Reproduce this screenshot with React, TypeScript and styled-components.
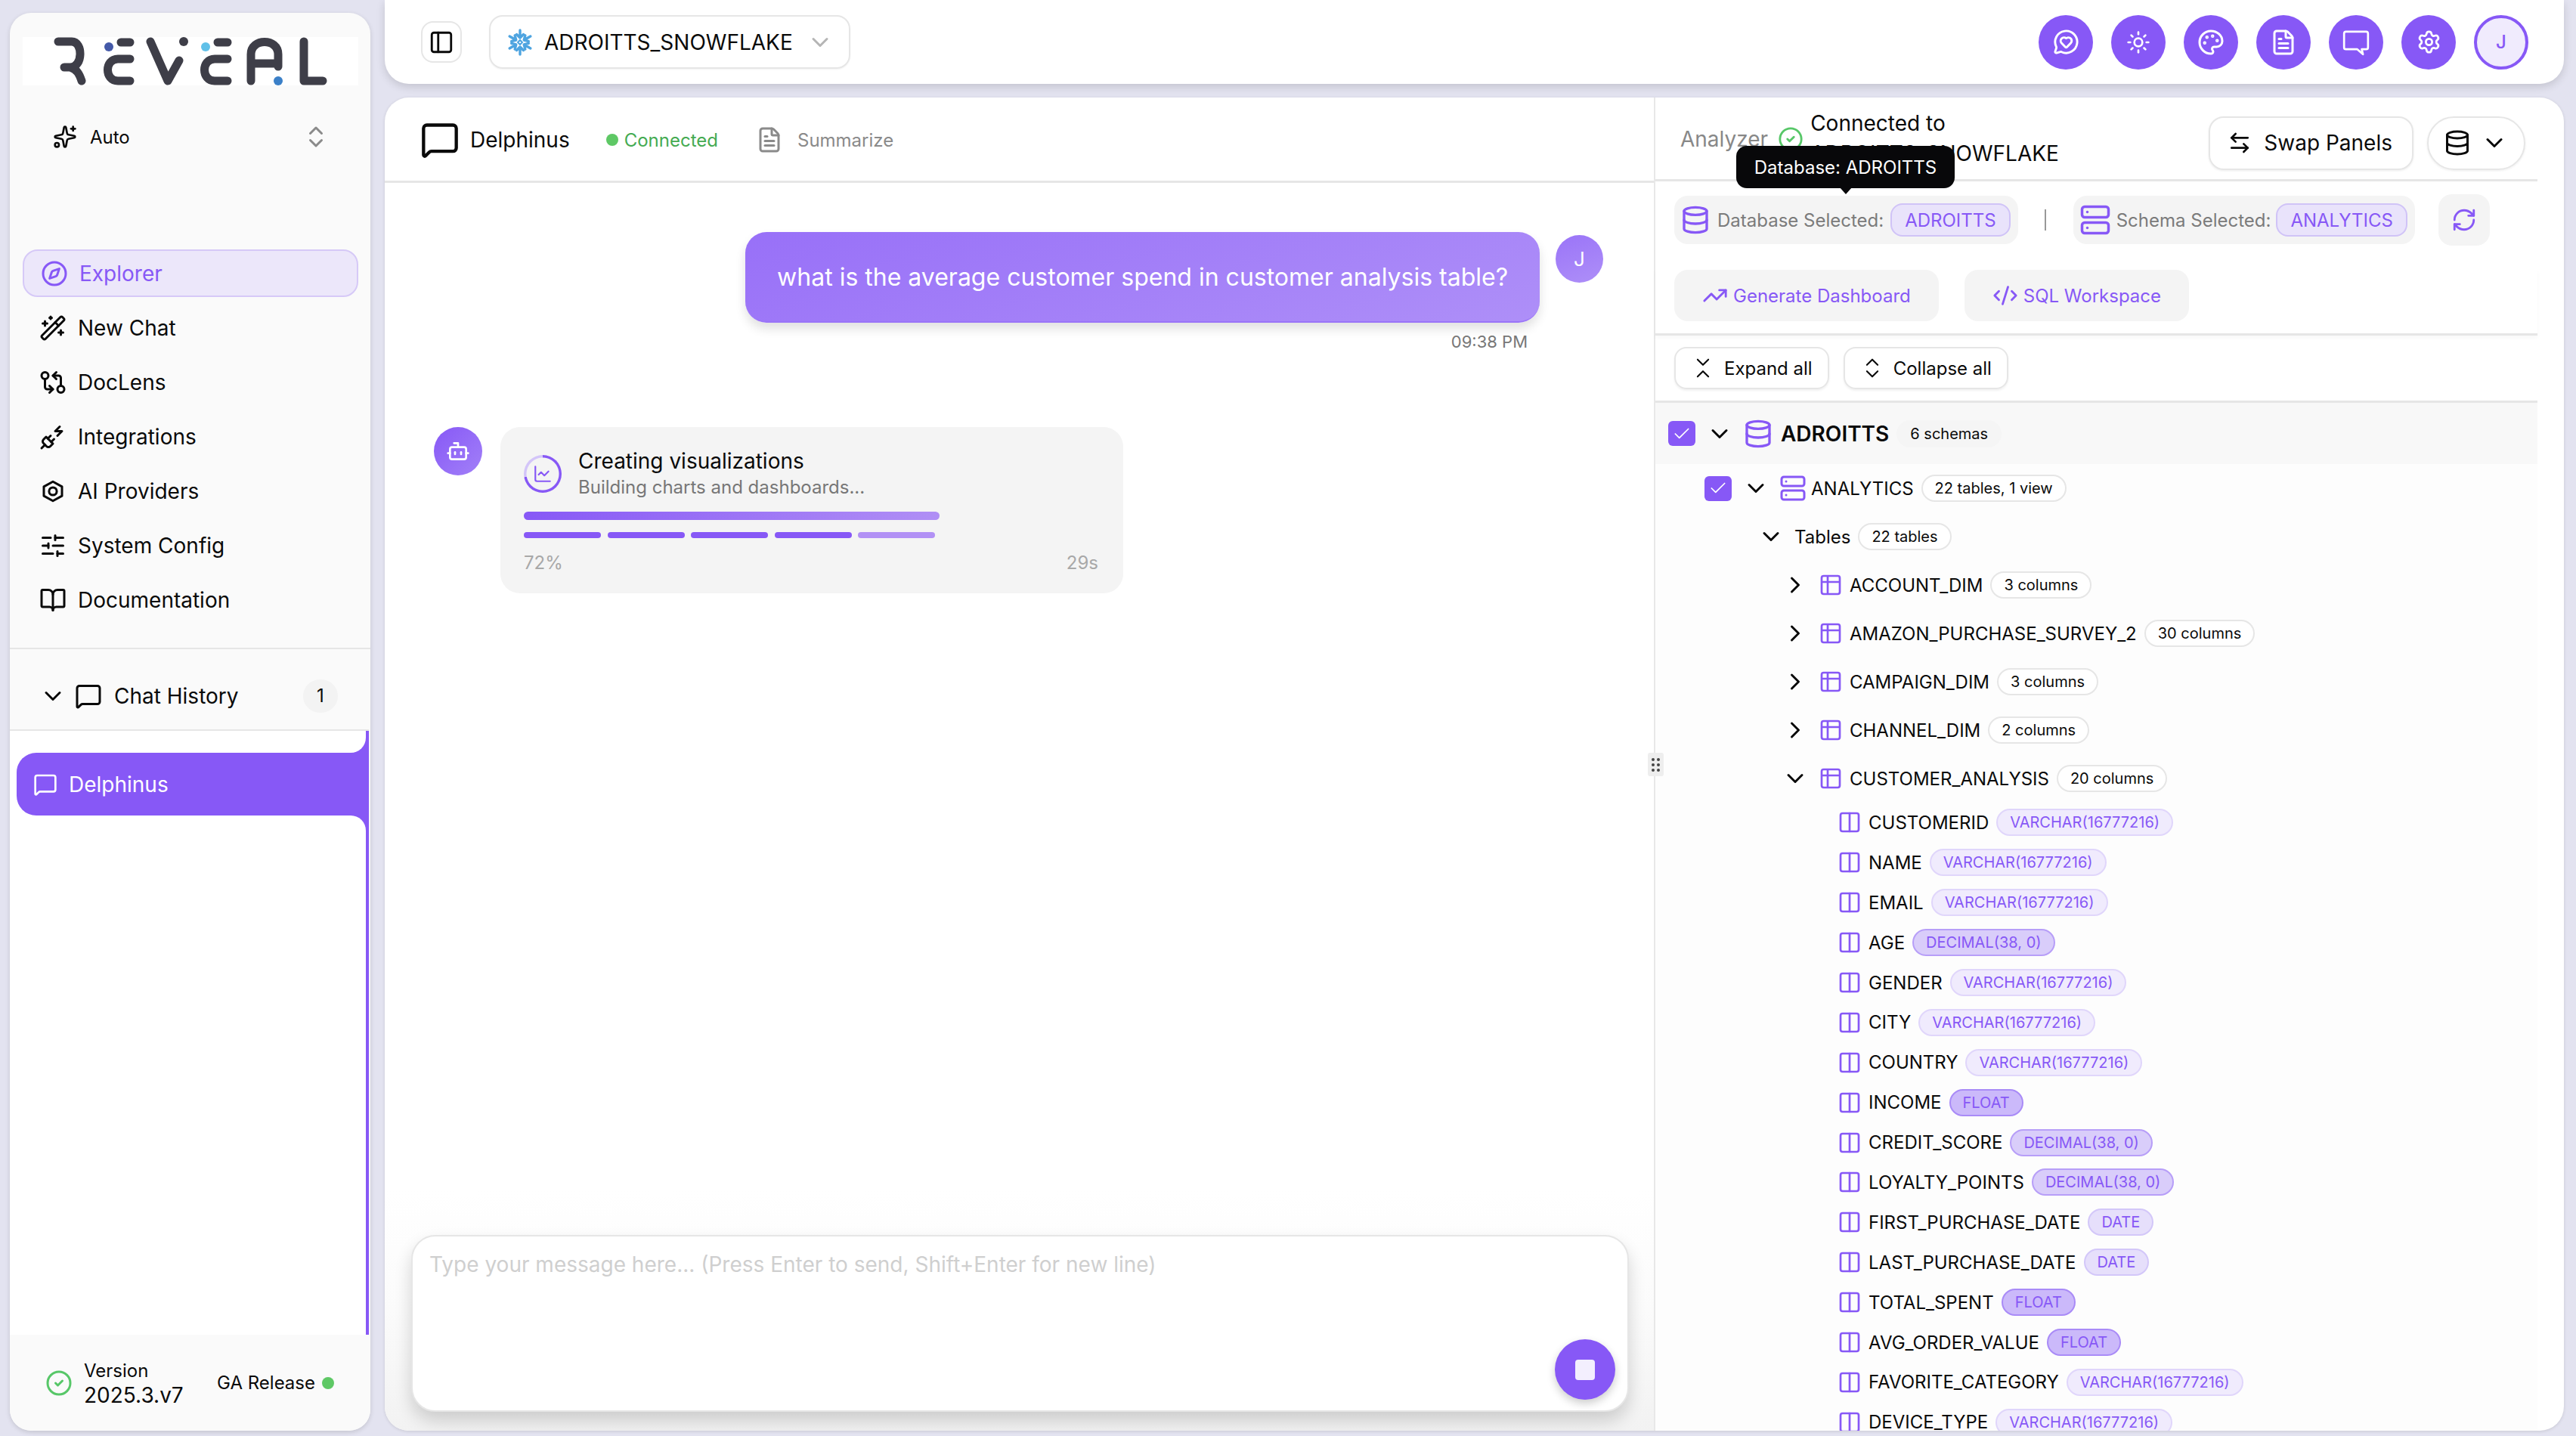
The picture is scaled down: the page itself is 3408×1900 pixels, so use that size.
import React from "react";
import styled, { createGlobalStyle } from "styled-components";
import {
  ArrowLeftRight,
  BookOpen,
  Bot,
  ChartLine,
  Check,
  ChevronDown,
  ChevronRight,
  ChevronsDownUp,
  ChevronsUpDown,
  CircleCheck,
  CodeXml,
  Columns2,
  Compass,
  Database,
  FileText,
  GitCompareArrows,
  MessageCircleHeart,
  MessageSquare,
  Palette,
  PanelLeft,
  PlugZap,
  RefreshCw,
  Server,
  Settings,
  SlidersHorizontal,
  Sparkles,
  Sun,
  Table2,
  TrendingUp,
  WandSparkles,
} from "lucide-react";

const PURPLE = "#8758f6";

type PillKind = "varchar" | "decimal" | "float" | "date";

const pillColors: Record<PillKind, { bg: string; border: string }> = {
  varchar: { bg: "#f0ebfd", border: "#e0d6fb" },
  decimal: { bg: "#d9cdfa", border: "#b79ef8" },
  float: { bg: "#cbb9fa", border: "#a98bf7" },
  date: { bg: "#e6dffb", border: "#d3c7f9" },
};

const tables = [
  { name: "ACCOUNT_DIM", count: "3 columns" },
  { name: "AMAZON_PURCHASE_SURVEY_2", count: "30 columns" },
  { name: "CAMPAIGN_DIM", count: "3 columns" },
  { name: "CHANNEL_DIM", count: "2 columns" },
];

const columns: { name: string; type: string; kind: PillKind }[] = [
  { name: "CUSTOMERID", type: "VARCHAR(16777216)", kind: "varchar" },
  { name: "NAME", type: "VARCHAR(16777216)", kind: "varchar" },
  { name: "EMAIL", type: "VARCHAR(16777216)", kind: "varchar" },
  { name: "AGE", type: "DECIMAL(38, 0)", kind: "decimal" },
  { name: "GENDER", type: "VARCHAR(16777216)", kind: "varchar" },
  { name: "CITY", type: "VARCHAR(16777216)", kind: "varchar" },
  { name: "COUNTRY", type: "VARCHAR(16777216)", kind: "varchar" },
  { name: "INCOME", type: "FLOAT", kind: "float" },
  { name: "CREDIT_SCORE", type: "DECIMAL(38, 0)", kind: "decimal" },
  { name: "LOYALTY_POINTS", type: "DECIMAL(38, 0)", kind: "decimal" },
  { name: "FIRST_PURCHASE_DATE", type: "DATE", kind: "date" },
  { name: "LAST_PURCHASE_DATE", type: "DATE", kind: "date" },
  { name: "TOTAL_SPENT", type: "FLOAT", kind: "float" },
  { name: "AVG_ORDER_VALUE", type: "FLOAT", kind: "float" },
  { name: "FAVORITE_CATEGORY", type: "VARCHAR(16777216)", kind: "varchar" },
  { name: "DEVICE_TYPE", type: "VARCHAR(16777216)", kind: "varchar" },
];

const GlobalStyle = createGlobalStyle`
  html, body {
    margin: 0;
    padding: 0;
    height: 1900px;
    overflow: hidden;
    background: #e3e3f0;
    font-family: Inter, "Noto Sans", sans-serif;
    color: #0a0a0a;
  }
  * { box-sizing: border-box; }
`;

const Page = styled.div`
  display: flex;
  gap: 19px;
  height: 1900px;
  padding: 0 16px 7px 13px;
  background: #e3e3f0;
`;

const Sidebar = styled.aside`
  display: flex;
  flex-direction: column;
  width: 477px;
  flex-shrink: 0;
  margin-top: 17px;
  padding-top: 32px;
  background: #fafafa;
  border-radius: 28px;
  box-shadow: 0 2px 6px rgba(0, 0, 0, 0.14);
  overflow: hidden;
`;

const LogoBox = styled.div`
  height: 64px;
  margin: 0 16px 0 17px;
  background: #fff;
  svg { display: block; }
`;

const ModeRow = styled.div`
  display: flex;
  align-items: center;
  height: 44px;
  margin: 46px 0 0 57px;
  padding-right: 54px;
  font-size: 24px;
  gap: 17px;
  span { flex: 1; }
  svg:last-child { color: #8a8a8a; }
`;

const Nav = styled.nav`
  display: flex;
  flex-direction: column;
  gap: 9px;
  margin-top: 127px;
  padding: 0 16px 32px 17px;
  border-bottom: 2px solid #e6e6e6;
`;

const NavItem = styled.div<{ $active?: boolean }>`
  display: flex;
  align-items: center;
  gap: 15px;
  height: 63px;
  padding-left: ${(p) => (p.$active ? "22px" : "20px")};
  font-size: 28px;
  border-radius: 20px;
  color: ${(p) => (p.$active ? PURPLE : "#0a0a0a")};
  background: ${(p) => (p.$active ? "#ece7fa" : "transparent")};
  border: 2px solid ${(p) => (p.$active ? "#d6c9f7" : "transparent")};
`;

const HistoryHeader = styled.div`
  display: flex;
  align-items: center;
  height: 108px;
  margin-right: 2px;
  padding: 17px 41px 0 39px;
  font-size: 28px;
  border-bottom: 2px solid #e6e6e6;
  gap: 11px;
  span { flex: 1; margin-left: 5px; }
`;

const CountBadge = styled.div`
  display: flex;
  align-items: center;
  justify-content: center;
  width: 46px;
  height: 44px;
  border-radius: 22px;
  background: #f3f3f3;
  font-size: 24px;
`;

const HistoryList = styled.div`
  display: flex;
  flex-direction: column;
  flex: 1;
  margin-right: 2px;
  background: ${PURPLE};
`;

const HistorySpacer = styled.div<{ $flex?: boolean; $top?: boolean }>`
  ${(p) => (p.$flex ? "flex: 1;" : "height: 29px;")}
  margin-right: 4px;
  background: #fff;
  border-${(p) => (p.$top ? "top" : "bottom")}-right-radius: 20px;
`;

const HistoryItemWrap = styled.div`
  background: #fff;
`;

const HistoryItem = styled.div`
  display: flex;
  align-items: center;
  gap: 15px;
  height: 83px;
  margin-left: 9px;
  padding-left: 22px;
  background: ${PURPLE};
  color: #fff;
  font-size: 28px;
  border-radius: 26px 0 0 26px;
`;

const SideFooter = styled.div`
  display: flex;
  align-items: center;
  height: 127px;
  padding: 0 48px 0 47px;
  background: #fafafa;
  svg { color: #57c768; flex-shrink: 0; }
`;

const VersionBlock = styled.div`
  display: flex;
  flex-direction: column;
  flex: 1;
  margin-left: 15px;
  line-height: 33px;
  font-size: 28px;
  small { font-size: 24px; }
`;

const ReleaseLabel = styled.div`
  display: flex;
  align-items: center;
  gap: 9px;
  font-size: 24px;
`;

const Dot = styled.i<{ $size?: number }>`
  display: block;
  width: ${(p) => p.$size ?? 16}px;
  height: ${(p) => p.$size ?? 16}px;
  border-radius: 50%;
  background: #5ec865;
`;

const MainColumn = styled.div`
  display: flex;
  flex-direction: column;
  gap: 18px;
  flex: 1;
  min-width: 0;
`;

const TopBar = styled.header`
  display: flex;
  align-items: center;
  flex-shrink: 0;
  height: 111px;
  padding: 0 47px 0 48px;
  background: #fff;
  border-radius: 0 0 32px 32px;
  box-shadow: 0 4px 12px rgba(0, 0, 0, 0.14);
`;

const ToggleButton = styled.div`
  display: flex;
  align-items: center;
  justify-content: center;
  width: 54px;
  height: 55px;
  border: 2px solid #e6e6e6;
  border-radius: 16px;
`;

const SourceSelect = styled.div`
  display: flex;
  align-items: center;
  width: 478px;
  height: 71px;
  margin-left: 36px;
  padding-left: 22px;
  border: 2px solid #e6e6e6;
  border-radius: 18px;
  font-size: 28px;
  box-shadow: 0 1px 2px rgba(0, 0, 0, 0.05);
  span { margin: 0 18px 0 15px; }
  > svg:last-child { color: #b5b5b5; }
`;

const TopActions = styled.div`
  display: flex;
  gap: 24px;
  margin-left: auto;
`;

const RoundAction = styled.div`
  display: flex;
  align-items: center;
  justify-content: center;
  width: 72px;
  height: 72px;
  border-radius: 50%;
  background: ${PURPLE};
  color: #fff;
`;

const ProfileAvatar = styled.div`
  display: flex;
  align-items: center;
  justify-content: center;
  width: 72px;
  height: 72px;
  border-radius: 50%;
  background: #f0ebfd;
  border: 4px solid ${PURPLE};
  color: ${PURPLE};
  font-size: 24px;
  font-weight: 500;
`;

const Workspace = styled.main`
  display: flex;
  flex: 1;
  min-height: 0;
  background: #fff;
  border-radius: 32px;
  overflow: hidden;
  box-shadow: 0 1px 4px rgba(0, 0, 0, 0.12);
`;

const ChatPanel = styled.section`
  display: flex;
  flex-direction: column;
  width: 1681px;
  flex-shrink: 0;
  border-right: 2px solid #e8e8e8;
`;

const ChatHeader = styled.div`
  display: flex;
  align-items: center;
  flex-shrink: 0;
  height: 113px;
  padding: 2px 0 0 47px;
  border-bottom: 3px solid #e6e6e6;
`;

const ChatTitle = styled.div`
  margin-left: 14px;
  font-size: 28px;
`;

const StatusText = styled.div`
  display: flex;
  align-items: center;
  gap: 8px;
  margin-left: 48px;
  color: #45ab52;
  font-size: 24px;
`;

const SummarizeText = styled.div`
  display: flex;
  align-items: center;
  gap: 19px;
  margin-left: 50px;
  color: #8a8a8a;
  font-size: 24px;
`;

const Messages = styled.div`
  display: flex;
  flex-direction: column;
  flex: 1;
  padding-top: 65px;
`;

const UserRow = styled.div`
  display: flex;
  justify-content: flex-end;
  gap: 21px;
  padding-right: 67px;
`;

const UserColumn = styled.div`
  display: flex;
  flex-direction: column;
  align-items: flex-end;
`;

const Bubble = styled.div`
  display: flex;
  align-items: center;
  height: 120px;
  padding: 0 42px;
  border-radius: 28px;
  background: linear-gradient(160deg, #9870f8, #ae8ff8);
  border-bottom: 2px solid #9a74f8;
  color: #fff;
  font-size: 32px;
  box-shadow: 0 8px 14px rgba(0, 0, 0, 0.12);
`;

const TimeLabel = styled.div`
  margin: 12px 16px 0 0;
  color: #777;
  font-size: 22px;
`;

const UserAvatar = styled.div`
  display: flex;
  align-items: center;
  justify-content: center;
  width: 63px;
  height: 63px;
  margin-top: 4px;
  border-radius: 50%;
  background: linear-gradient(160deg, #9a74f8, #ae8ff8);
  color: #fff;
  font-size: 26px;
`;

const AssistantRow = styled.div`
  display: flex;
  gap: 24px;
  margin-top: 100px;
  padding-left: 65px;
`;

const BotAvatar = styled.div`
  display: flex;
  align-items: center;
  justify-content: center;
  width: 64px;
  height: 64px;
  border-radius: 50%;
  color: #fff;
  background: linear-gradient(135deg, #8758f6, #a280f8);
`;

const ProgressCard = styled.div`
  display: flex;
  flex-direction: column;
  width: 824px;
  height: 220px;
  padding: 27px 33px 0 31px;
  background: #f4f4f4;
  border-radius: 26px;
`;

const ProgressHead = styled.div`
  display: flex;
  align-items: center;
  gap: 22px;
`;

const ProgressRing = styled.div<{ $percent: number }>`
  display: flex;
  align-items: center;
  justify-content: center;
  width: 50px;
  height: 50px;
  border-radius: 50%;
  color: ${PURPLE};
  background:
    radial-gradient(closest-side, #f4f4f4 calc(100% - 4px), transparent calc(100% - 3px)),
    conic-gradient(${PURPLE} 0 ${(p) => p.$percent}%, #d3c5f9 0);
`;

const ProgressTitle = styled.div`
  font-size: 28px;
  line-height: 36px;
`;

const ProgressSub = styled.div`
  color: #777;
  font-size: 24px;
  line-height: 34px;
`;

const ProgressBar = styled.div`
  width: 550px;
  height: 11px;
  margin-top: 15px;
  border-radius: 6px;
  background: linear-gradient(90deg, #8758f6, #b08ff5);
`;

const Segments = styled.div`
  display: flex;
  gap: 8.5px;
  margin-top: 16px;
`;

const Segment = styled.div<{ $light?: boolean }>`
  width: 102px;
  height: 8px;
  border-radius: 4px;
  background: ${(p) => (p.$light ? "#b291f5" : PURPLE)};
`;

const ProgressFoot = styled.div`
  display: flex;
  justify-content: space-between;
  margin-top: 18px;
  color: #a8a8a8;
  font-size: 24px;
`;

const ComposerArea = styled.div`
  flex-shrink: 0;
  padding: 60px 33px 25px 35px;
  background: linear-gradient(180deg, #fff 0%, #fbfbfb 50%, #f2f2f2 100%);
`;

const Composer = styled.div`
  position: relative;
  height: 234px;
  padding: 20px 22px;
  background: #fff;
  border: 2px solid #e6e6e6;
  border-radius: 32px;
  color: #cfcfcf;
  font-size: 28px;
  box-shadow: 0 12px 22px rgba(0, 0, 0, 0.16);
`;

const StopButton = styled.div`
  position: absolute;
  right: 16px;
  bottom: 14px;
  display: flex;
  align-items: center;
  justify-content: center;
  width: 80px;
  height: 80px;
  border-radius: 50%;
  background: ${PURPLE};
  box-shadow: 0 5px 12px rgba(0, 0, 0, 0.2);
  &::after {
    content: "";
    width: 26px;
    height: 27px;
    border-radius: 4px;
    background: #f3effe;
  }
`;

const ResizeHandle = styled.div`
  position: absolute;
  left: -10px;
  top: 867px;
  display: grid;
  grid-template-columns: 4px 4px;
  gap: 3px;
  align-content: center;
  justify-content: center;
  width: 21px;
  height: 31px;
  border-radius: 3px;
  background: #eee;
  i { width: 4px; height: 4px; border-radius: 50%; background: #444; }
`;

const AnalyzerPanel = styled.section`
  position: relative;
  display: flex;
  flex: 1;
  min-width: 0;
`;

const AnalyzerInner = styled.div`
  display: flex;
  flex-direction: column;
  width: 1167px;
  flex-shrink: 0;
`;

const AnalyzerHeader = styled.div`
  display: flex;
  align-items: center;
  flex-shrink: 0;
  height: 111px;
  padding: 2px 16px 0 33px;
  border-bottom: 3px solid #e6e6e6;
`;

const AnalyzerLabel = styled.div`
  color: #888;
  font-size: 28px;
  margin-right: 13px;
`;

const ConnectedText = styled.div`
  width: 340px;
  margin: -2px 0 0 9px;
  font-size: 28px;
  line-height: 40px;
`;

const OutlineButton = styled.div<{ $round?: boolean }>`
  display: flex;
  align-items: center;
  height: 71px;
  gap: ${(p) => (p.$round ? "13px" : "16px")};
  padding: ${(p) => (p.$round ? "0 21px 0 20px" : "0 26px 0 23px")};
  border: 2px solid #e6e6e6;
  border-radius: ${(p) => (p.$round ? "36px" : "20px")};
  font-size: 28px;
  box-shadow: 0 1px 3px rgba(0, 0, 0, 0.08);
`;

const HeaderButtons = styled.div`
  display: flex;
  gap: 18px;
  margin: 10px 0 0 auto;
`;

const Tooltip = styled.div`
  position: absolute;
  left: 107px;
  top: 64px;
  display: flex;
  align-items: center;
  justify-content: center;
  width: 289px;
  height: 56px;
  border-radius: 14px;
  background: #08080a;
  color: #fff;
  font-size: 24px;
  &::after {
    content: "";
    position: absolute;
    left: 137px;
    bottom: -8px;
    border-left: 8px solid transparent;
    border-right: 8px solid transparent;
    border-top: 9px solid #08080a;
  }
`;

const SelectionRow = styled.div`
  display: flex;
  align-items: center;
  height: 68px;
  margin-top: 17px;
  padding-left: 25px;
`;

const SelectionChip = styled.div<{ $gap: number }>`
  display: flex;
  align-items: center;
  gap: ${(p) => p.$gap}px;
  height: 64px;
  padding: 0 10px 0 8px;
  border-radius: 18px;
  background: #f4f4f4;
  color: #7b7b7b;
  font-size: 24px;
  > svg { color: ${PURPLE}; }
`;

const SelectionPill = styled.div`
  display: flex;
  align-items: center;
  height: 44px;
  padding: 0 17px;
  border: 2px solid #d0c3f7;
  border-radius: 16px;
  background: #e9e3fb;
  color: ${PURPLE};
`;

const Separator = styled.div`
  width: 2px;
  height: 28px;
  margin: 0 36px 0 35px;
  background: #999;
`;

const RefreshButton = styled.div`
  display: flex;
  align-items: center;
  justify-content: center;
  width: 68px;
  height: 68px;
  margin-left: 31px;
  border-radius: 18px;
  background: #f4f4f4;
  color: ${PURPLE};
`;

const ActionRow = styled.div`
  display: flex;
  gap: 34px;
  height: 87px;
  margin-top: 32px;
  padding-left: 25px;
  border-bottom: 3px solid #e6e6e6;
  box-shadow: 0 3px 5px rgba(0, 0, 0, 0.03);
`;

const ActionButton = styled.div`
  display: flex;
  align-items: center;
  gap: 7px;
  height: 68px;
  padding: 0 37px;
  border-radius: 18px;
  background: #f4f4f4;
  color: ${PURPLE};
  font-size: 24px;
`;

const TreeTools = styled.div`
  display: flex;
  align-items: center;
  gap: 19px;
  flex-shrink: 0;
  height: 89px;
  padding-left: 25px;
  border-bottom: 3px solid #e6e6e6;
`;

const ToolButton = styled.div`
  display: flex;
  align-items: center;
  gap: 11px;
  height: 56px;
  padding: 0 20px 0 19px;
  border: 2px solid #e6e6e6;
  border-radius: 16px;
  font-size: 24px;
  box-shadow: 0 2px 3px rgba(0, 0, 0, 0.06);
`;

const Tree = styled.div`
  display: flex;
  flex-direction: column;
  flex: 1;
  min-height: 0;
  overflow: hidden;
  background: #fdfdfd;
`;

const TreeRow = styled.div<{ $indent: number; $height: number; $head?: boolean }>`
  display: flex;
  align-items: center;
  flex-shrink: 0;
  gap: 10px;
  height: ${(p) => p.$height}px;
  padding-left: ${(p) => p.$indent}px;
  font-size: ${(p) => (p.$head ? "28px" : "24px")};
  font-weight: ${(p) => (p.$head ? 600 : 400)};
  background: ${(p) => (p.$head ? "#f8f8f8" : "transparent")};
  > svg { color: ${PURPLE}; flex-shrink: 0; }
`;

const Toggle = styled.div`
  display: flex;
  justify-content: center;
  width: 36px;
  margin: 0 3px 0 4px;
  flex-shrink: 0;
  color: #0a0a0a;
`;

const SchemaIcon = styled(Server)`
  margin-right: -4px;
`;

const TableIcon = styled(Table2)`
  margin-right: -1px;
`;

const ColumnIcon = styled(Columns2)`
  margin-right: -1px;
`;

const CheckBox = styled.div`
  display: flex;
  align-items: center;
  justify-content: center;
  width: 36px;
  height: 33px;
  flex-shrink: 0;
  border-radius: 6px;
  background: ${PURPLE};
  color: #fff;
`;

const CountPill = styled.div<{ $filled?: boolean }>`
  display: flex;
  align-items: center;
  height: 36px;
  padding: 0 16px;
  border-radius: 18px;
  font-size: 20px;
  font-weight: 400;
  background: ${(p) => (p.$filled ? "#f5f5f5" : "#fff")};
  border: 2px solid ${(p) => (p.$filled ? "#f5f5f5" : "#e6e6e6")};
`;

const TypePill = styled.div<{ $kind: PillKind }>`
  display: flex;
  align-items: center;
  height: 36px;
  padding: 0 16px;
  border-radius: 18px;
  font-size: 20px;
  color: ${PURPLE};
  background: ${(p) => pillColors[p.$kind].bg};
  border: 2px solid ${(p) => pillColors[p.$kind].border};
`;

function RevealLogo() {
  return (
    <svg width="444" height="64" viewBox="30 49 444 64" fill="none" stroke="#3e3e48" strokeWidth="11" strokeLinecap="round" strokeLinejoin="round" role="img" aria-label="Reveal">
      <path d="M77 55H95C110 55 110 89 93 89H85M93 89C102 92 105 98 108 107" />
      <path d="M160 56H172M172 78H156C138 78 138 107 156 107H172" />
      <path d="M199 55L222 107L237 80" />
      <path d="M288 56H301M301 78H284C266 78 266 107 284 107H301" />
      <path d="M332 107V72C332 50 368 50 368 72V88M332 84H368" />
      <path d="M402 55V107H427" />
      <g stroke="none">
        <circle cx="144" cy="62" r="6" fill="#4459a8" />
        <circle cx="243" cy="55" r="6" fill="#3e3e48" />
        <circle cx="272" cy="62" r="6" fill="#60c0e8" />
        <circle cx="368" cy="107" r="6" fill="#3b80c8" />
      </g>
    </svg>
  );
}

function HexIcon() {
  return (
    <svg width="36" height="36" viewBox="0 0 24 24" fill="none" stroke="currentColor" strokeWidth="2" strokeLinejoin="round">
      <path d="M12 3.5l8 4.4v8.2l-8 4.4-8-4.4V7.9z" />
      <circle cx="12" cy="12" r="3.4" />
    </svg>
  );
}

function SnowflakeLogo() {
  return (
    <svg width="34" height="38" viewBox="0 0 34 38" fill="none" stroke="#4ea4e0" strokeWidth="3.4" strokeLinecap="round" strokeLinejoin="round">
      {[0, 60, 120, 180, 240, 300].map((a) => (
        <g key={a} transform={`rotate(${a} 17 19)`}>
          <path d="M17 3v9M12.5 8.5L17 13l4.5-4.5" />
        </g>
      ))}
      <path d="M17 16l3 3-3 3-3-3z" strokeWidth="2" />
    </svg>
  );
}

function TailBubble() {
  return (
    <svg width="40" height="40" viewBox="0 0 24 24" fill="none" stroke="currentColor" strokeWidth="1.6" strokeLinejoin="round">
      <path d="M4 3.5h16a1.5 1.5 0 0 1 1.5 1.5v11a1.5 1.5 0 0 1-1.5 1.5h-3.5l1 4-4.5-4H4A1.5 1.5 0 0 1 2.5 16V5A1.5 1.5 0 0 1 4 3.5z" />
    </svg>
  );
}

export default function App() {
  return (
    <>
      <GlobalStyle />
      <Page>
        <Sidebar>
          <LogoBox>
            <RevealLogo />
          </LogoBox>
          <ModeRow>
            <Sparkles size={32} />
            <span>Auto</span>
            <ChevronsUpDown size={36} />
          </ModeRow>
          <Nav>
            <NavItem $active>
              <Compass size={36} />
              Explorer
            </NavItem>
            <NavItem>
              <WandSparkles size={36} />
              New Chat
            </NavItem>
            <NavItem>
              <GitCompareArrows size={36} />
              DocLens
            </NavItem>
            <NavItem>
              <PlugZap size={36} />
              Integrations
            </NavItem>
            <NavItem>
              <HexIcon />
              AI Providers
            </NavItem>
            <NavItem>
              <SlidersHorizontal size={36} />
              System Config
            </NavItem>
            <NavItem>
              <BookOpen size={36} />
              Documentation
            </NavItem>
          </Nav>
          <HistoryHeader>
            <ChevronDown size={36} />
            <MessageSquare size={36} />
            <span>Chat History</span>
            <CountBadge>1</CountBadge>
          </HistoryHeader>
          <HistoryList>
            <HistorySpacer />
            <HistoryItemWrap>
              <HistoryItem>
                <MessageSquare size={32} />
                Delphinus
              </HistoryItem>
            </HistoryItemWrap>
            <HistorySpacer $flex $top />
          </HistoryList>
          <SideFooter>
            <CircleCheck size={36} />
            <VersionBlock>
              <small>Version</small>
              2025.3.v7
            </VersionBlock>
            <ReleaseLabel>
              GA Release
              <Dot />
            </ReleaseLabel>
          </SideFooter>
        </Sidebar>

        <MainColumn>
          <TopBar>
            <ToggleButton>
              <PanelLeft size={34} />
            </ToggleButton>
            <SourceSelect>
              <SnowflakeLogo />
              <span>ADROITTS_SNOWFLAKE</span>
              <ChevronDown size={36} />
            </SourceSelect>
            <TopActions>
              <RoundAction>
                <MessageCircleHeart size={35} />
              </RoundAction>
              <RoundAction>
                <Sun size={32} />
              </RoundAction>
              <RoundAction>
                <Palette size={36} />
              </RoundAction>
              <RoundAction>
                <FileText size={36} />
              </RoundAction>
              <RoundAction>
                <TailBubble />
              </RoundAction>
              <RoundAction>
                <Settings size={33} />
              </RoundAction>
              <ProfileAvatar>J</ProfileAvatar>
            </TopActions>
          </TopBar>

          <Workspace>
            <ChatPanel>
              <ChatHeader>
                <MessageSquare size={52} />
                <ChatTitle>Delphinus</ChatTitle>
                <StatusText>
                  <Dot />
                  Connected
                </StatusText>
                <SummarizeText>
                  <FileText size={36} />
                  Summarize
                </SummarizeText>
              </ChatHeader>
              <Messages>
                <UserRow>
                  <UserColumn>
                    <Bubble>what is the average customer spend in customer analysis table?</Bubble>
                    <TimeLabel>09:38 PM</TimeLabel>
                  </UserColumn>
                  <UserAvatar>J</UserAvatar>
                </UserRow>
                <AssistantRow>
                  <BotAvatar>
                    <Bot size={32} />
                  </BotAvatar>
                  <ProgressCard>
                    <ProgressHead>
                      <ProgressRing $percent={72}>
                        <ChartLine size={26} />
                      </ProgressRing>
                      <div>
                        <ProgressTitle>Creating visualizations</ProgressTitle>
                        <ProgressSub>Building charts and dashboards...</ProgressSub>
                      </div>
                    </ProgressHead>
                    <ProgressBar />
                    <Segments>
                      <Segment />
                      <Segment />
                      <Segment />
                      <Segment />
                      <Segment $light />
                    </Segments>
                    <ProgressFoot>
                      <span>72%</span>
                      <span>29s</span>
                    </ProgressFoot>
                  </ProgressCard>
                </AssistantRow>
              </Messages>
              <ComposerArea>
                <Composer>
                  Type your message here... (Press Enter to send, Shift+Enter for new line)
                  <StopButton />
                </Composer>
              </ComposerArea>
            </ChatPanel>

            <AnalyzerPanel>
              <ResizeHandle>
                <i /><i /><i /><i /><i /><i />
              </ResizeHandle>
              <AnalyzerInner>
                <AnalyzerHeader>
                  <AnalyzerLabel>Analyzer</AnalyzerLabel>
                  <CircleCheck size={34} color="#57c768" />
                  <ConnectedText>Connected to ADROITTS_SNOWFLAKE</ConnectedText>
                  <HeaderButtons>
                    <OutlineButton>
                      <ArrowLeftRight size={32} />
                      Swap Panels
                    </OutlineButton>
                    <OutlineButton $round>
                      <Database size={36} />
                      <ChevronDown size={36} />
                    </OutlineButton>
                  </HeaderButtons>
                </AnalyzerHeader>
                <SelectionRow>
                  <SelectionChip $gap={9}>
                    <Database size={40} />
                    Database Selected:
                    <SelectionPill>ADROITTS</SelectionPill>
                  </SelectionChip>
                  <Separator />
                  <SelectionChip $gap={7}>
                    <Server size={42} />
                    Schema Selected:
                    <SelectionPill>ANALYTICS</SelectionPill>
                  </SelectionChip>
                  <RefreshButton>
                    <RefreshCw size={34} />
                  </RefreshButton>
                </SelectionRow>
                <ActionRow>
                  <ActionButton>
                    <TrendingUp size={34} />
                    Generate Dashboard
                  </ActionButton>
                  <ActionButton>
                    <CodeXml size={34} />
                    SQL Workspace
                  </ActionButton>
                </ActionRow>
                <TreeTools>
                  <ToolButton>
                    <ChevronsDownUp size={34} strokeWidth={1.5} />
                    Expand all
                  </ToolButton>
                  <ToolButton>
                    <ChevronsUpDown size={34} strokeWidth={1.5} />
                    Collapse all
                  </ToolButton>
                </TreeTools>
                <Tree>
                  <TreeRow $indent={17} $height={81} $head>
                    <CheckBox>
                      <Check size={26} strokeWidth={1.6} />
                    </CheckBox>
                    <Toggle>
                      <ChevronDown size={36} />
                    </Toggle>
                    <Database size={40} />
                    ADROITTS
                    <CountPill $filled>6 schemas</CountPill>
                  </TreeRow>
                  <TreeRow $indent={65} $height={64}>
                    <CheckBox>
                      <Check size={26} strokeWidth={1.6} />
                    </CheckBox>
                    <Toggle>
                      <ChevronDown size={36} />
                    </Toggle>
                    <SchemaIcon size={36} />
                    ANALYTICS
                    <CountPill>22 tables, 1 view</CountPill>
                  </TreeRow>
                  <TreeRow $indent={131} $height={64}>
                    <Toggle>
                      <ChevronDown size={36} />
                    </Toggle>
                    Tables
                    <CountPill>22 tables</CountPill>
                  </TreeRow>
                  {tables.map((t) => (
                    <TreeRow key={t.name} $indent={163} $height={64}>
                      <Toggle>
                        <ChevronRight size={36} />
                      </Toggle>
                      <TableIcon size={32} />
                      {t.name}
                      <CountPill>{t.count}</CountPill>
                    </TreeRow>
                  ))}
                  <TreeRow $indent={163} $height={64}>
                    <Toggle>
                      <ChevronDown size={36} />
                    </Toggle>
                    <TableIcon size={32} />
                    CUSTOMER_ANALYSIS
                    <CountPill>20 columns</CountPill>
                  </TreeRow>
                  {columns.map((c) => (
                    <TreeRow key={c.name} $indent={241} $height={52.9}>
                      <ColumnIcon size={32} />
                      {c.name}
                      <TypePill $kind={c.kind}>{c.type}</TypePill>
                    </TreeRow>
                  ))}
                </Tree>
              </AnalyzerInner>
              <Tooltip>Database: ADROITTS</Tooltip>
            </AnalyzerPanel>
          </Workspace>
        </MainColumn>
      </Page>
    </>
  );
}
